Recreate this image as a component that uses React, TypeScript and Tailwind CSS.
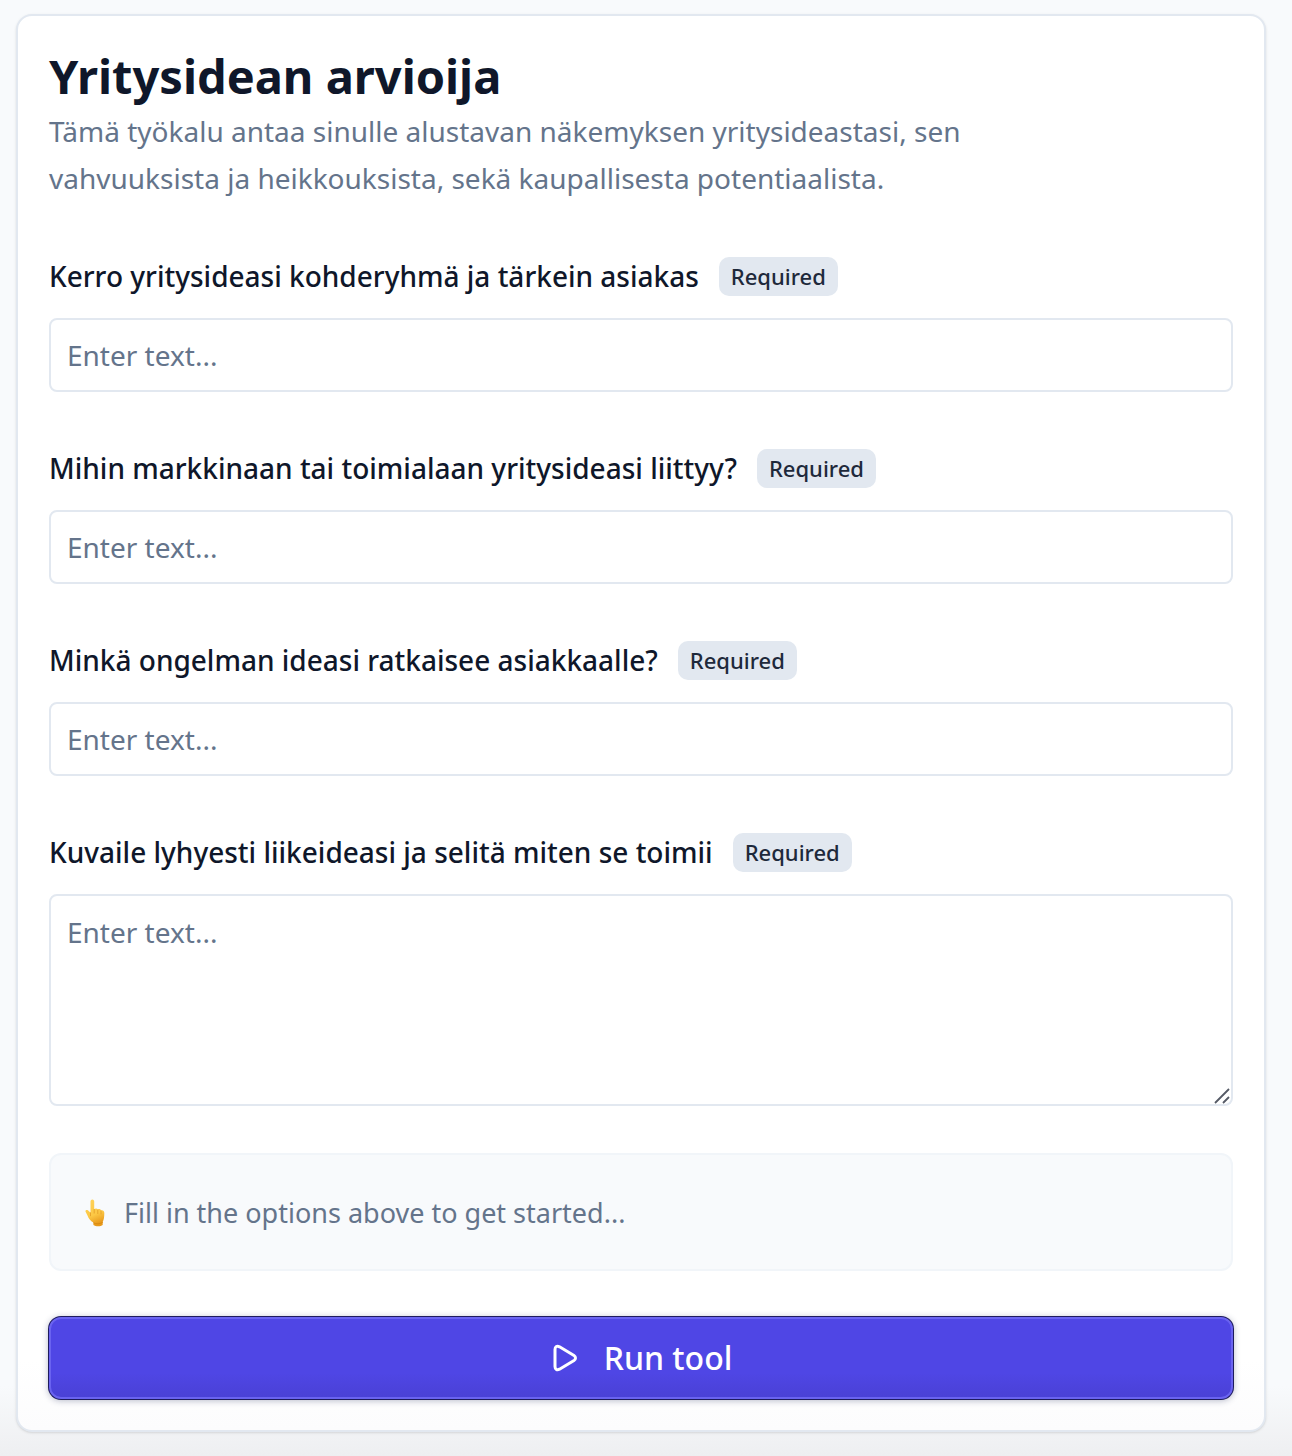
import React from "react";

const fields = [
  { id: "audience", label: "Kerro yritysideasi kohderyhmä ja tärkein asiakas" },
  { id: "market", label: "Mihin markkinaan tai toimialaan yritysideasi liittyy?" },
  { id: "problem", label: "Minkä ongelman ideasi ratkaisee asiakkaalle?" },
  { id: "idea", label: "Kuvaile lyhyesti liikeideasi ja selitä miten se toimii", multiline: true },
];

const control =
  "block w-full rounded-lg border-2 border-[#e2e8f0] bg-white px-4 text-[28px] leading-10 text-[#0f172a] placeholder:text-[#64748b] placeholder:opacity-100";

function Field({ id, label, multiline }: { id: string; label: string; multiline?: boolean }) {
  return (
    <div>
      <div className="flex h-10 items-center gap-5">
        <label htmlFor={id} className="text-[28px] leading-10 font-[530] text-[#0f172a]">
          {label}
        </label>
        <span className="rounded-[10px] bg-[#e2e8f0] px-3 text-[22px] leading-[39px] font-medium text-[#1e293b]">
          Required
        </span>
      </div>
      <div className="mt-[22px]">
        {multiline ? (
          <div className="relative">
            <textarea id={id} placeholder="Enter text..." className={control + " h-[212px] resize-none py-4"} />
            <svg className="pointer-events-none absolute right-[3px] bottom-[2px] h-4 w-4" viewBox="0 0 16 16" fill="none" stroke="#555a66" strokeWidth="1.8" aria-hidden="true">
              <path d="M1 15 15 1M9 15l6-6" />
            </svg>
          </div>
        ) : (
          <input id={id} type="text" placeholder="Enter text..." className={control + " h-[74px]"} />
        )}
      </div>
    </div>
  );
}

function PointingHand() {
  return (
    <svg className="h-7 w-5 shrink-0" viewBox="0 0 20 28" aria-hidden="true">
      <defs>
        <linearGradient id="skin" x1="0" y1="0" x2="0.3" y2="1">
          <stop offset="0" stopColor="#ffd35a" />
          <stop offset="0.65" stopColor="#fcc845" />
          <stop offset="1" stopColor="#e89a1c" />
        </linearGradient>
      </defs>
      <path d="M5.500 2.500C5.500-.2 9.200-.2 9.200 2.500V10c1.500-1 3-.6 3.600.4 1.300-.7 2.700-.2 3.200.9 2-.6 3.300.6 3.300 2.700 0 3.500-.3 6.500-1.600 9v3c-2 1.700-7 1.700-9.300 0v-2.500C5.500 22 3.600 19.500 2.500 16.500L.6 12.800c-.6-1.600 1-2.500 2.300-1.500l2.600 2.500z" fill="url(#skin)" />
      <path d="M9.200 10.500v3.600M12.800 11v3.600M16 12v3M5.500 13.800v3" stroke="#e5a02a" strokeWidth="0.900" fill="none" strokeLinecap="round" />
      <path d="M8.400 23.800c3 1.500 6.300 1.400 9.300-.4" stroke="#d98a12" strokeWidth="1" fill="none" />
    </svg>
  );
}

export default function App() {
  return (
    <main className="min-h-screen bg-[#f8fafc] bg-[linear-gradient(to_top,#eeeff1,#f8fafc_70px)] pt-[14px] pr-[26px] pb-6 pl-4 font-['Noto_Sans',sans-serif]">
      <form
        onSubmit={(e) => e.preventDefault()}
        className="rounded-2xl border-2 border-[#e2e8f0] bg-white bg-[linear-gradient(to_top,#fcfcfd,#ffffff_70px)] px-[31px] pt-[30px] pb-[31px] shadow-sm"
      >
        <h1 className="text-[47px] leading-[60px] font-bold text-[#0f172a]">Yritysidean arvioija</h1>
        <p className="mt-[2px] max-w-[1000px] text-[28px] leading-[47px] text-[#64748b]">
          Tämä työkalu antaa sinulle alustavan näkemyksen yritysideastasi, sen vahvuuksista ja heikkouksista, sekä
          kaupallisesta potentiaalista.
        </p>
        <div className="mt-[54px] flex flex-col gap-14">
          {fields.map((f) => (
            <Field key={f.id} {...f} />
          ))}
        </div>
        <div className="mt-[47px] flex h-[118px] items-center gap-[19px] rounded-xl border-2 border-[#f1f5f9] bg-[#f8fafc] px-[34px] pt-[2px]">
          <PointingHand />
          <p className="text-[27px] leading-10 text-[#64748b]">Fill in the options above to get started...</p>
        </div>
        <button
          type="submit"
          className="mt-[46px] flex h-[82px] w-full items-center justify-center gap-[22px] rounded-xl border-2 border-[#6a63f0] bg-[#4f46e5] bg-[linear-gradient(to_top,#4a41d6,#4f46e5_24px)] text-[32px] leading-10 font-[530] text-white shadow-[0_0_0_1px_#1e1b5e,0_1px_6px_1px_rgba(30,41,90,0.3)]"
        >
          <svg className="h-8 w-8" viewBox="0 0 32 32" fill="none" stroke="currentColor" strokeWidth="3" strokeLinejoin="round" aria-hidden="true">
            <path d="M5 7.500v17c0 3 2 4 4.500 2.700l14.500-8.700c2-1.300 2-3.700 0-5l-14.500-8.700C7 3.500 5 4.500 5 7.500z" />
          </svg>
          Run tool
        </button>
      </form>
    </main>
  );
}
